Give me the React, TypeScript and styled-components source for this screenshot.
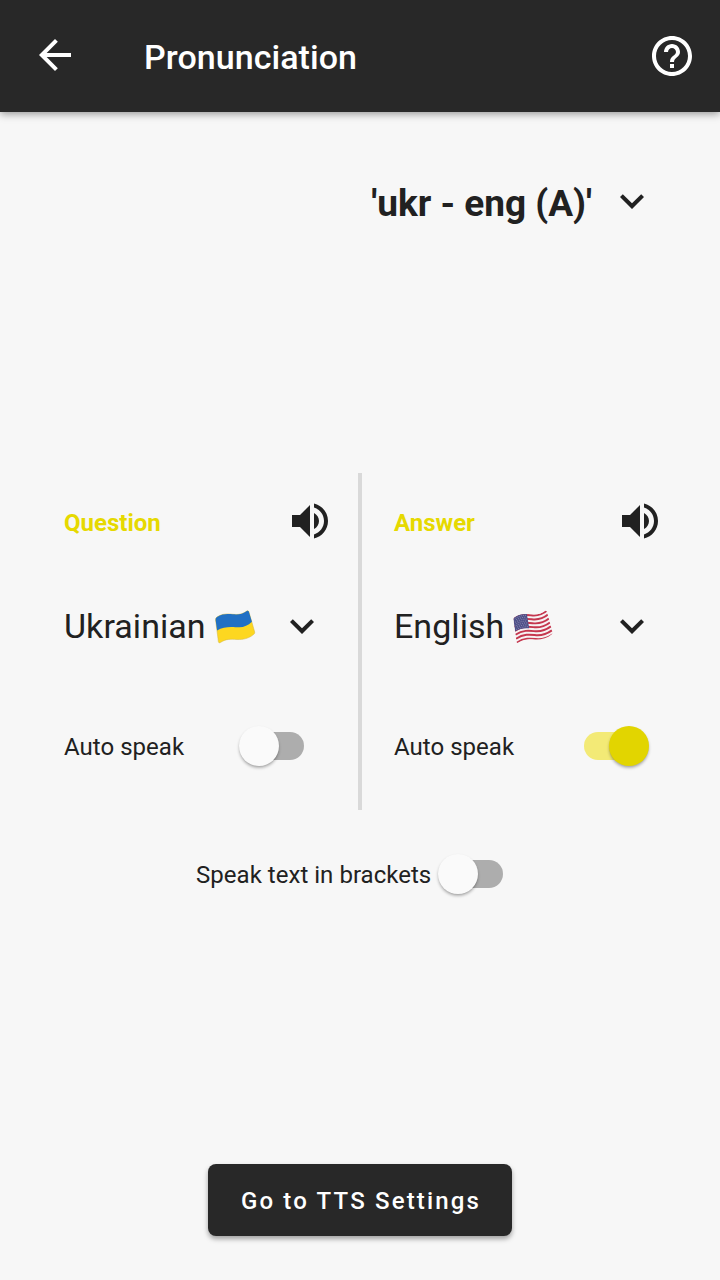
import React from "react";
import styled, { createGlobalStyle } from "styled-components";

const GlobalStyle = createGlobalStyle`
  * { box-sizing: border-box; }
  html, body { margin: 0; padding: 0; }
  body { background: #f7f7f7; font-family: Roboto, "Noto Sans", sans-serif; color: #212121; }
`;

const Screen = styled.div`
  width: 720px;
  height: 1280px;
  display: flex;
  flex-direction: column;
  background: #f7f7f7;
  overflow: hidden;
`;

const AppBar = styled.header`
  height: 112px;
  flex: none;
  display: flex;
  align-items: center;
  padding: 0 24px 0 31px;
  background: #282828;
  color: #fff;
  box-shadow: 0 2px 8px rgba(0, 0, 0, 0.4);
`;

const IconButton = styled.button`
  width: 48px;
  height: 48px;
  flex: none;
  display: block;
  padding: 0;
  border: 0;
  background: none;
  color: inherit;
`;

const BackButton = styled(IconButton)`
  margin-bottom: 2px;
`;

const Title = styled.h1`
  flex: 1;
  margin: 2px 0 0 65px;
  font-size: 34px;
  font-weight: 500;
  line-height: 40px;
  letter-spacing: 0.06px;
`;

const Icon = styled.svg`
  display: block;
  width: 48px;
  height: 48px;
  fill: currentColor;
`;

const DeckSelect = styled.div`
  height: 48px;
  margin-top: 65px;
  padding-right: 64px;
  display: flex;
  justify-content: flex-end;
  align-items: center;
  gap: 16px;
`;

const DeckName = styled.span`
  margin-top: 5px;
  font-size: 37px;
  font-weight: 700;
  line-height: 44px;
`;

const Sides = styled.main`
  height: 337px;
  margin-top: 248px;
  display: grid;
  grid-template-columns: 358px 4px 358px;
`;

const Divider = styled.div`
  background: #d9d9d9;
`;

const Side = styled.section<{ $first?: boolean }>`
  padding: 24px ${(p) => (p.$first ? 24 : 56)}px 0 ${(p) => (p.$first ? 64 : 32)}px;
  display: flex;
  flex-direction: column;
`;

const Row = styled.div<{ $top?: number; $inset?: number }>`
  height: 48px;
  margin-top: ${(p) => p.$top ?? 0}px;
  padding-right: ${(p) => p.$inset ?? 0}px;
  display: flex;
  align-items: center;
  justify-content: space-between;
`;

const SideTitle = styled.h2`
  margin: 4px 0 0;
  color: #e6d900;
  font-size: 24px;
  font-weight: 700;
  line-height: 32px;
`;

const Language = styled.span`
  display: flex;
  align-items: center;
  gap: 9px;
  font-size: 34px;
  line-height: 44px;
  letter-spacing: 0.05px;
`;

const FlagSvg = styled.svg`
  display: block;
  width: 41px;
  height: 34px;
  margin-top: 1px;
`;

const Label = styled.span`
  margin-top: 2px;
  font-size: 24px;
  line-height: 32px;
  letter-spacing: 0.03px;
  white-space: nowrap;
`;

const Switch = styled.span<{ $on?: boolean }>`
  width: 65px;
  height: 28px;
  flex: none;
  display: flex;
  align-items: center;
  justify-content: ${(p) => (p.$on ? "flex-end" : "flex-start")};
  background: linear-gradient(${(p) => (p.$on ? "#f3ea76, #f3ea76" : "#adadad, #adadad")})
    ${(p) => (p.$on ? "left" : "right")} / 50px 28px no-repeat;
  border-radius: 14px;
`;

const Thumb = styled.span<{ $on?: boolean }>`
  width: 40px;
  height: 40px;
  border-radius: 50%;
  background: ${(p) => (p.$on ? "#e2d500" : "#fafafa")};
  box-shadow: 0 2px 3px rgba(0, 0, 0, 0.27), 0 1px 1px rgba(0, 0, 0, 0.06);
`;

const BracketsRow = styled.div`
  width: 307px;
  height: 48px;
  margin: 40px 0 0 196px;
  display: flex;
  align-items: center;
  justify-content: space-between;
`;

const SettingsButton = styled.button`
  width: 304px;
  height: 72px;
  margin: auto auto 44px;
  flex: none;
  padding: 2px 0 0 2px;
  border: 0;
  border-radius: 8px;
  background: #282828;
  color: #fff;
  font: 500 24px/32px Roboto, sans-serif;
  letter-spacing: 2.16px;
  box-shadow: 0 3px 5px rgba(0, 0, 0, 0.35);
`;

const Chevron = () => (
  <Icon viewBox="0 0 24 24">
    <path d="M7.41 8.59 12 13.17l4.59-4.58L18 10l-6 6-6-6z" />
  </Icon>
);

const Volume = () => (
  <Icon viewBox="0 0 24 24">
    <path d="M3 9v6h4l5 5V4L7 9H3zm13.5 3c0-1.77-1.02-3.29-2.5-4.03v8.05c1.48-.73 2.5-2.25 2.5-4.02zM14 3.23v2.06c2.89.86 5 3.54 5 6.71s-2.11 5.85-5 6.71v2.06c4.01-.91 7-4.49 7-8.77s-2.99-7.86-7-8.77z" />
  </Icon>
);

const flagOutline =
  "M.6 10Q.3 8 2 7C8 3.2 13 3.8 18 4.3S28 4.2 31.8 1Q33.3 0 33.9 1.8L39.7 22Q40.1 23.2 38.8 24.3C34 28.5 28 29.8 22 29.5S11 28.6 5.4 32.6Q3.7 33.6 3.4 31.8Z";

const UkraineFlag = () => (
  <FlagSvg viewBox="0 0 41 34">
    <path fill="#fdd720" stroke="#d3b640" strokeWidth=".5" d={flagOutline} />
    <path
      fill="#2170c4"
      d="M.6 10Q.3 8 2 7C8 3.2 13 3.8 18 4.3S28 4.2 31.8 1Q33.3 0 33.9 1.8L36.9 11.8C33 15.5 29 17.4 24 17.3S9 15.6 2.1 20.6Z"
    />
  </FlagSvg>
);

const rows = [0, 1, 2, 3, 4, 5, 6];

const stripePath = (i: number) => {
  const dx = i * 0.75;
  const y = i * 3.95;
  return `M${dx * 0.8} ${9 + y}C${7 + dx} ${4 + y} ${13 + dx} ${4.7 + y} ${18 + dx} ${5.3 + y}S${29 + dx} ${5 + y} ${34 + dx * 1.3} ${0.6 + y}`;
};

const UsFlag = () => (
  <FlagSvg viewBox="0 0 41 34">
    <defs>
      <clipPath id="us-flag">
        <path d={flagOutline} />
      </clipPath>
    </defs>
    <g clipPath="url(#us-flag)">
      <rect width="41" height="34" fill="#f6f2f3" />
      {rows.map((i) => (
        <path key={i} fill="none" stroke="#c5374f" strokeWidth="1.95" d={stripePath(i)} />
      ))}
      <path fill="#4f5089" d="M0 8.3C5 4.6 9 3.6 13.8 3.6L16.2 18.3C11 17.8 7 18.7 2 21.3Z" />
      {rows.map((i) => (
        <path
          key={i}
          fill="none"
          stroke="#aeb0cc"
          strokeWidth=".8"
          strokeDasharray=".8 1.4"
          strokeDashoffset={i % 2 ? 1.1 : 0}
          d={`M${1.8 + i * 0.25} ${8.6 + i * 1.8}Q${7 + i * 0.25} ${5.4 + i * 1.9} ${13 + i * 0.3} ${5.3 + i * 1.9}`}
        />
      ))}
    </g>
  </FlagSvg>
);

const Toggle = ({ on }: { on?: boolean }) => (
  <Switch $on={on} role="switch" aria-checked={!!on}>
    <Thumb $on={on} />
  </Switch>
);

export default function App() {
  return (
    <Screen>
      <GlobalStyle />
      <AppBar>
        <BackButton>
          <Icon viewBox="0 0 24 24">
            <path d="M20 11H7.83l5.59-5.59L12 4l-8 8 8 8 1.41-1.41L7.83 13H20z" />
          </Icon>
        </BackButton>
        <Title>Pronunciation</Title>
        <IconButton>
          <Icon viewBox="0 0 24 24">
            <path d="M11 18h2v-2h-2v2zm1-16C6.48 2 2 6.48 2 12s4.48 10 10 10 10-4.48 10-10S17.52 2 12 2zm0 18c-4.41 0-8-3.59-8-8s3.59-8 8-8 8 3.59 8 8-3.59 8-8 8zm0-14c-2.21 0-4 1.79-4 4h2c0-1.1.9-2 2-2s2 .9 2 2c0 2-3 1.75-3 5h2c0-2.25 3-2.5 3-5 0-2.21-1.79-4-4-4z" />
          </Icon>
        </IconButton>
      </AppBar>
      <DeckSelect>
        <DeckName>'ukr - eng (A)'</DeckName>
        <Chevron />
      </DeckSelect>
      <Sides>
        <Side $first>
          <Row>
            <SideTitle>Question</SideTitle>
            <Volume />
          </Row>
          <Row $top={57} $inset={8}>
            <Language>Ukrainian <UkraineFlag /></Language>
            <Chevron />
          </Row>
          <Row $top={72} $inset={30}>
            <Label>Auto speak</Label>
            <Toggle />
          </Row>
        </Side>
        <Divider />
        <Side>
          <Row>
            <SideTitle>Answer</SideTitle>
            <Volume />
          </Row>
          <Row $top={57} $inset={8}>
            <Language>English <UsFlag /></Language>
            <Chevron />
          </Row>
          <Row $top={72} $inset={15}>
            <Label>Auto speak</Label>
            <Toggle on />
          </Row>
        </Side>
      </Sides>
      <BracketsRow>
        <Label>Speak text in brackets</Label>
        <Toggle />
      </BracketsRow>
      <SettingsButton>Go to TTS Settings</SettingsButton>
    </Screen>
  );
}
